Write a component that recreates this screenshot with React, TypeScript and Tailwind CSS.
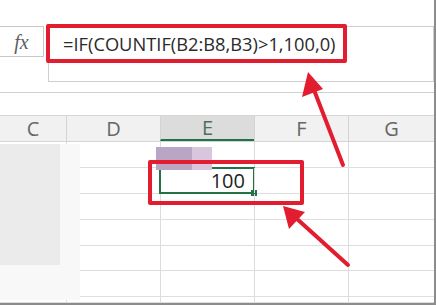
import React from "react";

const cols = [
  { name: "C", w: 66 },
  { name: "D", w: 94 },
  { name: "E", w: 94 },
  { name: "F", w: 94 },
  { name: "G", w: 86 },
];

const rowHeights = [26, 26, 26, 26, 25, 26, 6];

export default function App() {
  return (
    <div
      className="relative w-[436px] h-[305px] overflow-hidden bg-white border-r-2 border-b-2 border-[#8c8c8c]"
      style={{ fontFamily: '"Open Sans", "Liberation Sans", sans-serif' }}
    >
      {/* top spacer */}
      <div className="h-[26px]" />
      {/* formula bar */}
      <div className="flex h-[56px]">
        <div className="w-[44px] h-[31px] border-y border-r border-[#c8c8c8] flex items-center justify-center">
          <span
            className="italic text-[#5e5e5e] text-[20px] leading-none"
            style={{ fontFamily: '"Liberation Serif", "DejaVu Serif", serif' }}
          >
            fx
          </span>
        </div>
        <div className="ml-[4px] flex-1 border border-[#cfcfcf] flex items-start">
          <div className="pl-[14px] pt-[5px] text-[18.3px] text-[#2a2a2a] leading-[24px]">
            =IF(COUNTIF(B2:B8,B3)&gt;1,100,0)
          </div>
        </div>
      </div>
      <div className="h-[11px] border-b border-[#d0d0d0]" />
      <div className="h-[23px] border-b border-[#d6d6d6]" />
      {/* column header */}
      <div className="flex h-[26px] bg-[#f1f1f1] border-b border-[#d4d4d4]">
        {cols.map((c, i) => (
          <div
            key={c.name}
            style={{ width: c.w }}
            className={
              c.name === "E"
                ? "flex items-center justify-center border-l border-[#d4d4d4] bg-[#dcdcdc] border-b-2 border-b-[#217346] text-[20px] text-[#4d6e5a]"
                : i === 0
                ? "flex items-center justify-center text-[20px] text-[#666666]"
                : "flex items-center justify-center border-l border-[#d4d4d4] text-[20px] text-[#666666]"
            }
          >
            {c.name}
          </div>
        ))}
      </div>
      {/* body rows */}
      {rowHeights.map((h, r) => (
        <div key={r} className="flex border-b border-[#dedede]" style={{ height: h }}>
          {cols.map((c, i) => (
            <div
              key={c.name}
              style={{ width: c.w }}
              className={i === 0 ? "" : "border-l border-[#dcdcdc] relative"}
            >
              {r === 1 && c.name === "E" ? (
                <div className="absolute -left-[2px] -top-[1px] w-[96px] h-[27px] border-2 border-[#217346] flex items-center justify-end pr-[8px] text-[20px] text-[#1e1e1e]">
                  100
                  <div className="absolute -right-[4px] -bottom-[4px] w-[6px] h-[6px] bg-[#217346]" />
                </div>
              ) : null}
            </div>
          ))}
        </div>
      ))}

      {/* blurred region over column C */}
      <div className="absolute left-0 top-[144px] w-[80px] h-[156px] bg-[#f8f8f8]">
        <div className="w-[60px] h-[121px] bg-[#ebebeb]" />
      </div>
      {/* purple blur above E2 */}
      <div className="absolute left-[156px] top-[147px] h-[23px] flex">
        <div className="w-[36px] h-full bg-[#bba5c4]" />
        <div className="w-[20px] h-full bg-[#d9c5de]" />
      </div>

      {/* red annotation boxes */}
      <div className="absolute left-[46px] top-[24px] w-[301px] h-[39px] border-[4px] border-[#e11d2f] rounded-[2px]" />
      <div className="absolute left-[148px] top-[160px] w-[156px] h-[45px] border-[4px] border-[#e11d2f] rounded-[2px]" />

      {/* arrows */}
      <svg className="absolute left-0 top-0" width="436" height="305" viewBox="0 0 436 305">
        <line x1="343" y1="165" x2="314" y2="90" stroke="#e11d2f" strokeWidth="4" strokeLinecap="round" />
        <polygon points="308,72 302,97 323,89" fill="#e11d2f" />
        <line x1="348" y1="265" x2="296" y2="218" stroke="#e11d2f" strokeWidth="4" strokeLinecap="round" />
        <polygon points="283,206 289,229 305,212" fill="#e11d2f" />
      </svg>
    </div>
  );
}
